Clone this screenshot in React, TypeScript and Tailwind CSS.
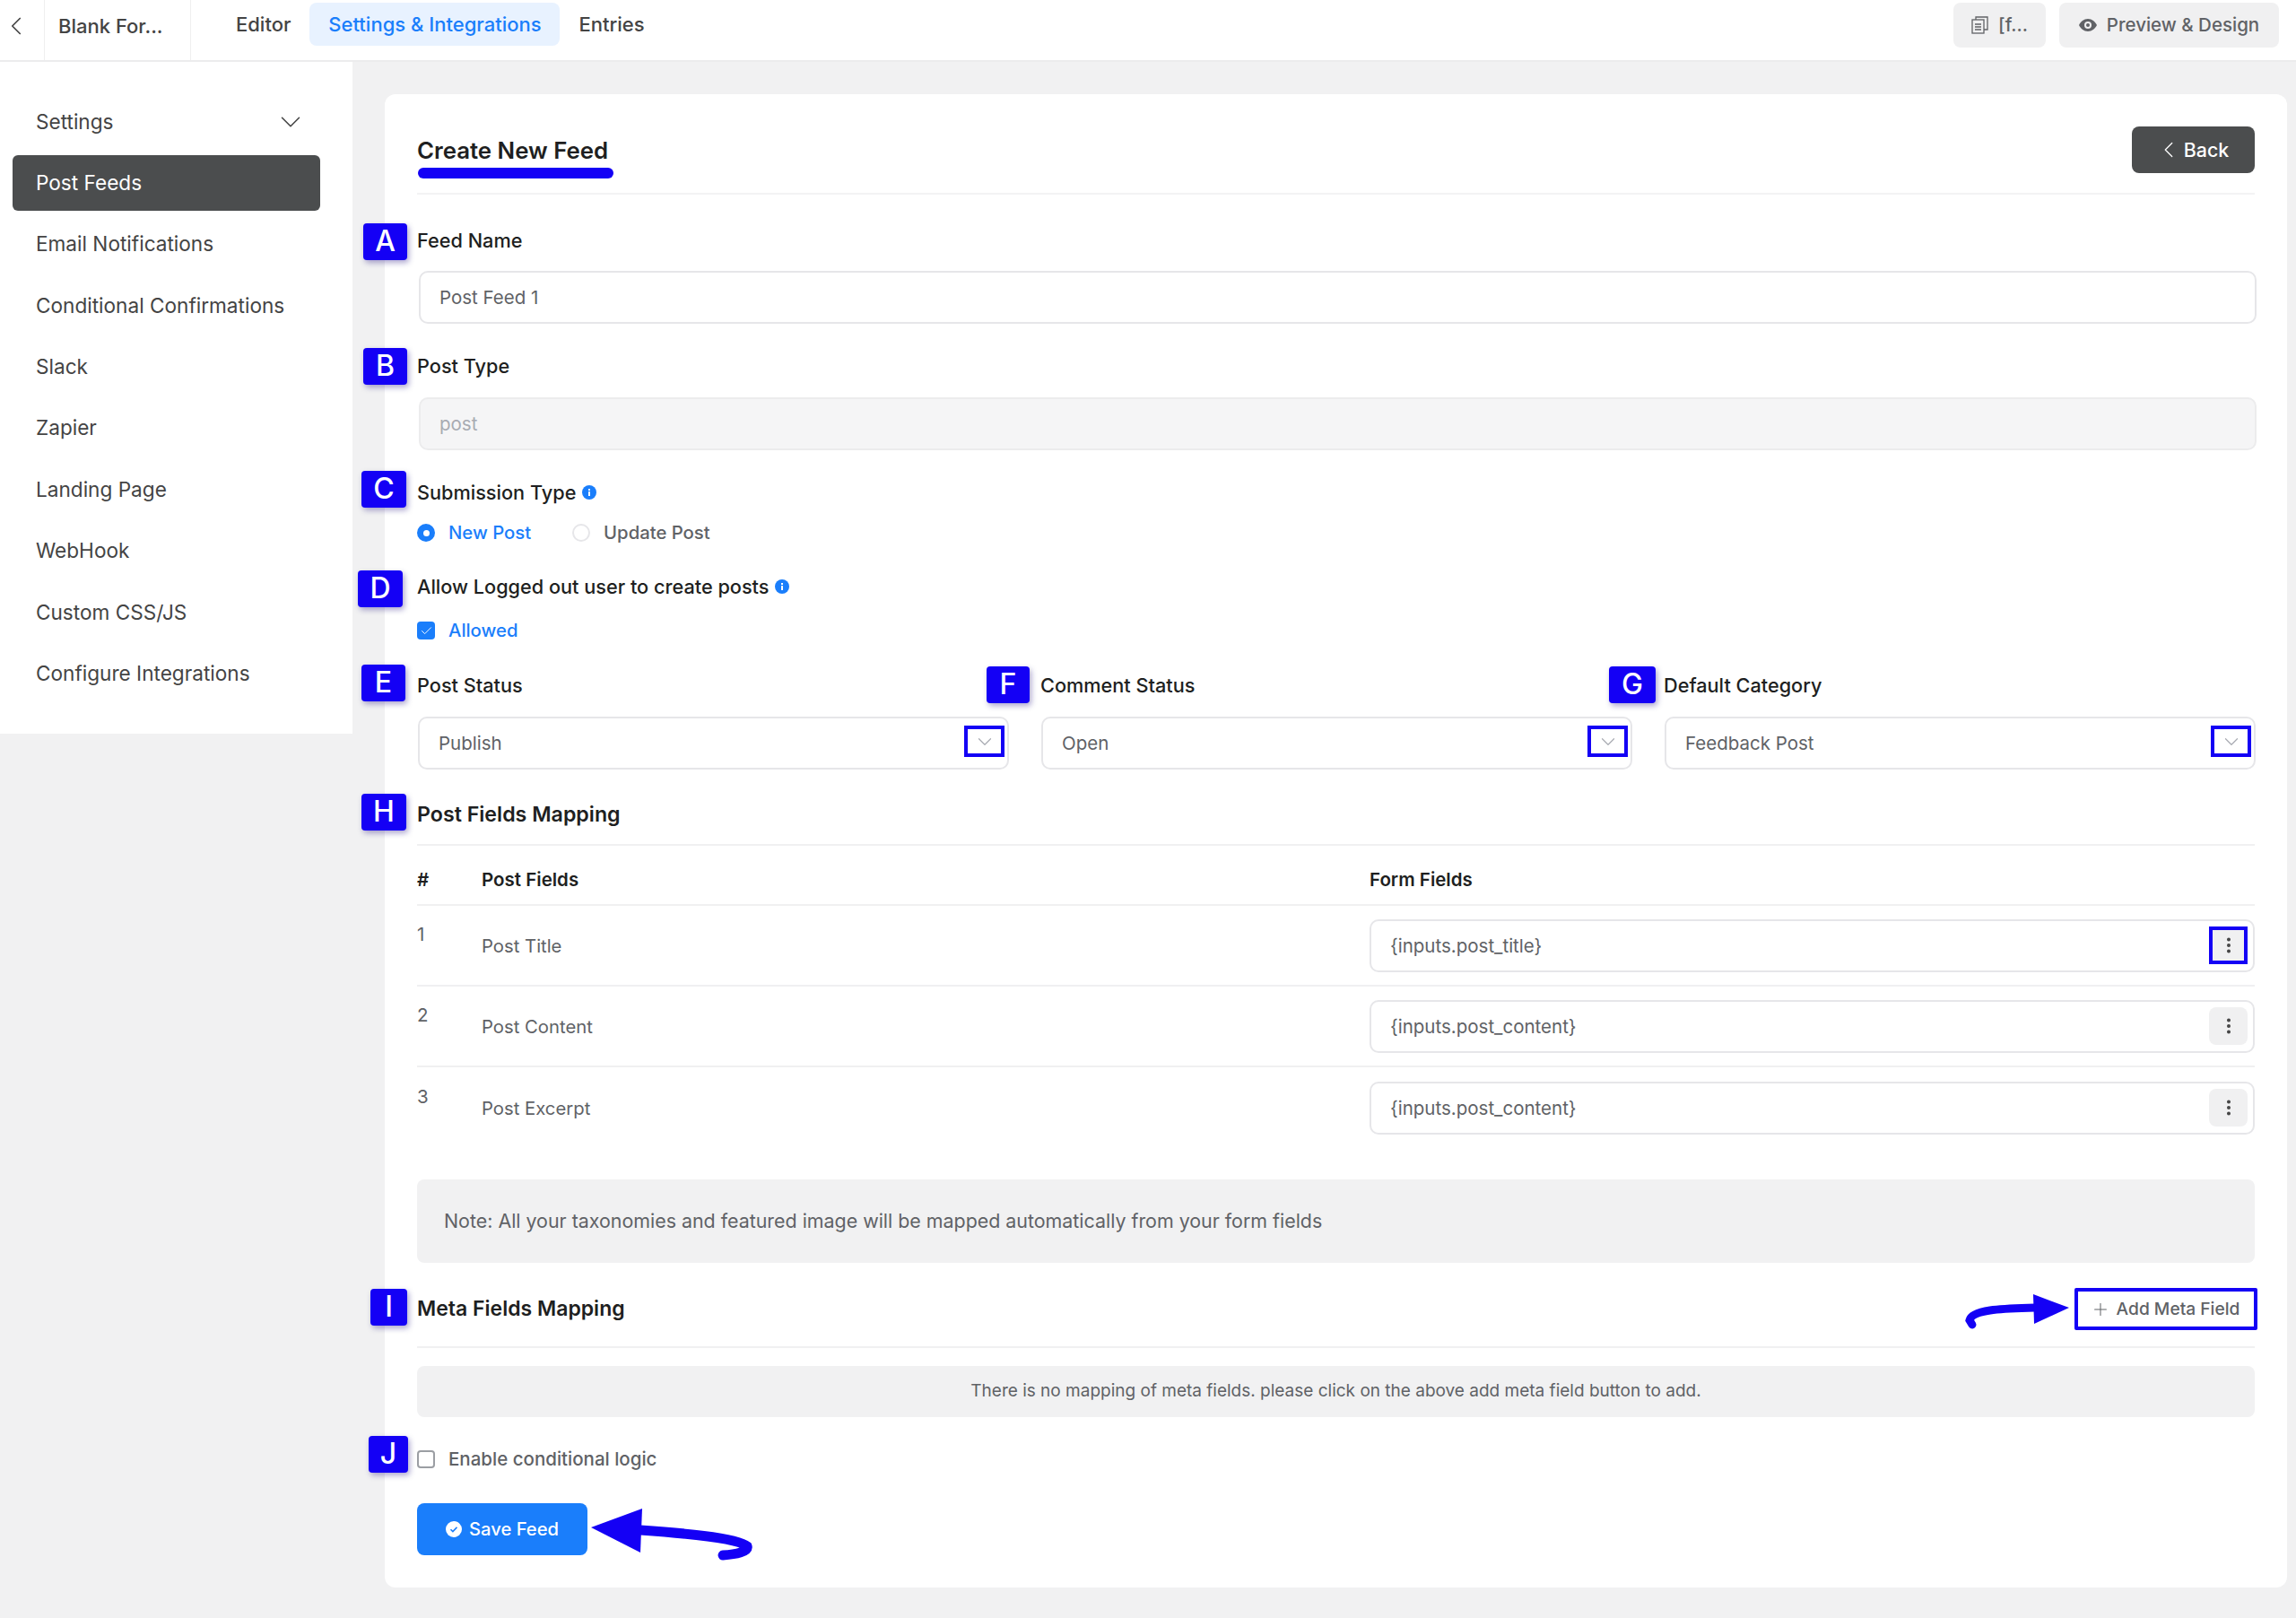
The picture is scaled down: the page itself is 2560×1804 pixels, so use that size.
import React from "react";
import { ChevronLeft, ChevronDown, Plus, Check, EllipsisVertical } from "lucide-react";

function Badge({ letter, className }: { letter: string; className: string }) {
  return (
    <div className={"absolute flex items-center justify-center rounded-[4px] bg-[#1400f5] pb-[2px] text-[32px] font-medium leading-none text-white shadow-[2px_3px_6px_rgba(20,0,120,0.35)] " + className}>
      {letter}
    </div>
  );
}

function Info() {
  return (
    <svg width="16" height="16" viewBox="0 0 16 16" className="ml-[7px] shrink-0">
      <circle cx="8" cy="8" r="8" fill="#1a7efb" />
      <rect x="7" y="7" width="2" height="5" fill="#fff" />
      <rect x="7" y="4" width="2" height="2" fill="#fff" />
    </svg>
  );
}

function Label({ children }: { children: React.ReactNode }) {
  return <div className="flex h-[28px] items-center text-[21.7px] font-medium text-[#1e1f21]">{children}</div>;
}

function Select({ value }: { value: string }) {
  return (
    <div className="relative -mr-[1px] ml-[1px] mt-[21px] flex h-[59px] items-center rounded-[10px] border-2 border-[#e6e6e9] pl-[21px] pt-[2px] text-[20.5px] text-[#606266]">
      {value}
      <div className="absolute right-[3px] top-[8px] flex h-[35px] w-[45px] items-center justify-center border-[4px] border-[#1400f5]">
        <ChevronDown size={26} strokeWidth={1.1} color="#a8abb2" />
      </div>
    </div>
  );
}

function Row({ n, name, value, hot, last }: { n: string; name: string; value: string; hot?: boolean; last?: boolean }) {
  return (
    <div className={"grid h-[90px] grid-cols-[72px_990px_1fr] items-center " + (last ? "" : "border-b-2 border-[#f0f0f1]")}>
      <div className="mb-[24px] text-[20.5px] text-[#606266]">{n}</div>
      <div className="pt-[2px] text-[20.3px] text-[#606266]">{name}</div>
      <div className="flex h-[59px] items-center justify-between rounded-[10px] border-2 border-[#e6e6e9] pl-[21px] pr-[6px] text-[20.5px] text-[#606266]">
        <span className="pt-[2px]">{value}</span>
        <div className={"flex h-[42px] w-[43px] items-center justify-center bg-[#f0f0f1] " + (hot ? "border-[4px] border-[#1400f5]" : "rounded-[8px]")}>
          <EllipsisVertical size={22} strokeWidth={2.4} color="#444" />
        </div>
      </div>
    </div>
  );
}

const menu = ["Email Notifications", "Conditional Confirmations", "Slack", "Zapier", "Landing Page", "WebHook", "Custom CSS/JS", "Configure Integrations"];

export default function App() {
  return (
    <div className="flex min-h-[1804px] w-full flex-col bg-[#f1f1f2] font-[Inter,sans-serif]">
      <header className="flex h-[69px] items-center border-b-2 border-[#ececed] bg-white pr-[19px]">
        <div className="flex h-full w-[50px] items-center justify-center border-r border-[#efefef] pb-[9px]">
          <ChevronLeft size={34} strokeWidth={1.2} color="#444" className="-ml-[14px]" />
        </div>
        <div className="flex h-full w-[163px] items-center border-r border-[#efefef] pb-[9px] pl-[15px] text-[22px] font-medium text-[#444]">Blank For...</div>
        <nav className="ml-[50px] flex items-center pb-[13px] text-[22px] font-medium text-[#444]">
          <span className="mr-[21px]">Editor</span>
          <span className="flex h-[48px] w-[279px] items-center justify-center rounded-[8px] bg-[#e8f2ff] text-[#1a7efb]">Settings &amp; Integrations</span>
          <span className="ml-[21px]">Entries</span>
        </nav>
        <div className="ml-auto flex items-center gap-[15px] pb-[11px] text-[20.5px] font-medium text-[#606266]">
          <div className="flex h-[50px] w-[103px] items-center justify-center gap-[10px] rounded-[8px] bg-[#f0f0f1]">
            <svg width="20" height="20" viewBox="0 0 20 20" fill="none" stroke="#606266" strokeWidth="1.3">
              <rect x="1" y="4" width="13" height="15" />
              <path d="M5 4V1h13v14h-4M4 9h7M4 12h7M4 15h7" />
            </svg>
            <span>[f...</span>
          </div>
          <div className="flex h-[50px] w-[245px] items-center justify-center gap-[11px] rounded-[8px] bg-[#f0f0f1]">
            <svg width="20" height="14" viewBox="0 0 20 14">
              <path fillRule="evenodd" fill="#606266" d="M10 0c4.500 0 8 3 10 7-2 4-5.500 7-10 7S2 11 0 7c2-4 5.500-7 10-7zm0 3a4 4 0 100 8 4 4 0 000-8zm0 2a2 2 0 110 4 2 2 0 010-4z" />
            </svg>
            <span>Preview &amp; Design</span>
          </div>
        </div>
      </header>

      <div className="flex flex-1">
        <aside className="h-[749px] w-[393px] shrink-0 bg-white pl-[14px] pt-[33px] text-[22.6px] text-[#444]">
          <div className="flex h-[68px] w-[343px] items-center justify-between pl-[26px] pr-[14px]">
            Settings
            <ChevronDown size={38} strokeWidth={1} color="#444" />
          </div>
          <div className="mt-[3px] flex h-[62px] w-[343px] items-center rounded-[6px] bg-[#4b4d4e] pl-[26px] text-white">Post Feeds</div>
          <div className="mt-[3px]">
            {menu.map((m) => (
              <div key={m} className="flex h-[68.4px] items-center pl-[26px]">{m}</div>
            ))}
          </div>
        </aside>

        <main className="flex-1 pl-[36px] pr-[10px] pt-[36px]">
          <div className="relative rounded-[12px] bg-white px-[36px] pb-[36px] pt-[36px]">
            <div className="flex h-[76px] items-start justify-between border-b-2 border-[#f3f3f4]">
              <h1 className="pt-[10px] text-[25.8px] font-semibold leading-[34px] text-[#1e1f21]">Create New Feed</h1>
              <button className="flex h-[52px] w-[137px] items-center justify-center gap-[2px] rounded-[8px] bg-[#4b4d4e] pr-[3px] text-[21.4px] font-medium text-white">
                <ChevronLeft size={30} strokeWidth={1} />
                Back
              </button>
            </div>
            <div className="absolute left-[37px] top-[82px] h-[12px] w-[218px] rounded-full bg-[#1400f5]" />

            <div className="mt-[37px]"><Label>Feed Name</Label></div>
            <div className="-mr-[2px] ml-[2px] mt-[20px] flex h-[59px] items-center rounded-[10px] border-2 border-[#e6e6e9] pl-[21px] pt-[2px] text-[20.5px] text-[#606266]">Post Feed 1</div>

            <div className="mt-[33px]"><Label>Post Type</Label></div>
            <div className="-mr-[2px] ml-[2px] mt-[21px] flex h-[59px] items-center rounded-[10px] border-2 border-[#ececed] bg-[#f5f5f6] pl-[21px] pt-[2px] text-[20.5px] text-[#a8abb2]">post</div>

            <div className="mt-[33px]"><Label>Submission Type<Info /></Label></div>
            <div className="mt-[17px] flex h-[28px] items-center text-[20.3px] font-medium">
              <span className="flex h-[20px] w-[20px] items-center justify-center rounded-full bg-[#1a7efb]"><span className="h-[7px] w-[7px] rounded-full bg-white" /></span>
              <span className="ml-[15px] text-[#1a7efb]">New Post</span>
              <span className="ml-[46px] h-[20px] w-[20px] rounded-full border-2 border-[#e6e6e9]" />
              <span className="ml-[15px] text-[#606266]">Update Post</span>
            </div>

            <div className="mt-[32px]"><Label>Allow Logged out user to create posts<Info /></Label></div>
            <div className="mt-[21px] flex h-[28px] items-center text-[20.3px] font-medium text-[#1a7efb]">
              <span className="flex h-[20px] w-[20px] items-center justify-center rounded-[4px] bg-[#1a7efb]"><Check size={15} strokeWidth={1.5} color="#fff" /></span>
              <span className="ml-[15px]">Allowed</span>
            </div>

            <div className="mt-[33px] grid grid-cols-3 gap-x-[36px]">
              <div><Label>Post Status</Label><Select value="Publish" /></div>
              <div><Label>Comment Status</Label><Select value="Open" /></div>
              <div><Label>Default Category</Label><Select value="Feedback Post" /></div>
            </div>

            <div className="mt-[36px] h-[49px] border-b-2 border-[#f0f0f1]">
              <div className="flex h-[28px] items-center text-[23.2px] font-semibold text-[#1e1f21]">Post Fields Mapping</div>
            </div>
            <div className="grid h-[67px] grid-cols-[72px_990px_1fr] items-center border-b-2 border-[#f0f0f1] pt-[12px] text-[20.5px] font-semibold text-[#1e1f21]">
              <span>#</span>
              <span>Post Fields</span>
              <span>Form Fields</span>
            </div>
            <Row n="1" name="Post Title" value="{inputs.post_title}" hot />
            <Row n="2" name="Post Content" value="{inputs.post_content}" />
            <Row n="3" name="Post Excerpt" value="{inputs.post_content}" last />

            <div className="mt-[35px] flex h-[93px] items-center rounded-[8px] bg-[#f1f1f2] pl-[30px] text-[21.4px] text-[#606266]">
              Note: All your taxonomies and featured image will be mapped automatically from your form fields
            </div>

            <div className="mt-[28px] flex h-[67px] items-start justify-between border-b-2 border-[#f0f0f1]">
              <div className="flex h-[47px] items-center text-[23px] font-semibold text-[#1e1f21]">Meta Fields Mapping</div>
              <button className="-mr-[3px] flex h-[47px] w-[204px] items-center justify-center gap-[7px] rounded-[2px] border-[4px] border-[#1400f5] pr-[2px] text-[19.2px] font-medium text-[#606266]">
                <Plus size={22} strokeWidth={1.1} />
                Add Meta Field
              </button>
            </div>
            <div className="mt-[20px] flex h-[57px] items-center justify-center rounded-[8px] bg-[#f1f1f2] text-[19px] text-[#606266]">
              There is no mapping of meta fields. please click on the above add meta field button to add.
            </div>

            <div className="mt-[33px] flex h-[28px] items-center text-[20.5px] font-medium text-[#606266]">
              <span className="h-[20px] w-[20px] rounded-[4px] border-2 border-[#9b9ea3]" />
              <span className="ml-[15px]">Enable conditional logic</span>
            </div>

            <button className="mt-[35px] flex h-[58px] w-[190px] items-center justify-center gap-[8px] rounded-[8px] bg-[#1a7efb] text-[20.2px] font-medium text-white">
              <svg width="18" height="18" viewBox="0 0 18 18">
                <circle cx="9" cy="9" r="9" fill="#fff" />
                <path d="M5.500 9.200l2.400 2.400 4.600-4.800" fill="none" stroke="#1a7efb" strokeWidth="1.6" />
              </svg>
              Save Feed
            </button>

            <Badge letter="A" className="left-[-24px] top-[144px] h-[41px] w-[49px]" />
            <Badge letter="B" className="left-[-24px] top-[283px] h-[41px] w-[49px]" />
            <Badge letter="C" className="left-[-26px] top-[420px] h-[41px] w-[50px]" />
            <Badge letter="D" className="left-[-30px] top-[531px] h-[41px] w-[50px]" />
            <Badge letter="E" className="left-[-26px] top-[636px] h-[41px] w-[49px]" />
            <Badge letter="F" className="left-[671px] top-[638px] h-[41px] w-[48px]" />
            <Badge letter="G" className="left-[1365px] top-[638px] h-[41px] w-[52px]" />
            <Badge letter="H" className="left-[-26px] top-[780px] h-[41px] w-[50px]" />
            <Badge letter="I" className="left-[-16px] top-[1332px] h-[41px] w-[41px]" />
            <Badge letter="J" className="left-[-18px] top-[1496px] h-[41px] w-[44px]" />

            <svg className="absolute left-[1760px] top-[1330px]" width="125" height="50" viewBox="0 0 125 50" fill="none">
              <path d="M80 23 C50 24 10 24 7 37 L10 42" stroke="#1400f5" strokeWidth="9" strokeLinecap="round" />
              <path d="M78 8 L118 23 L79 41 Z" fill="#1400f5" />
            </svg>
            <svg className="absolute left-[227px] top-[1575px]" width="190" height="62" viewBox="0 0 190 62" fill="none">
              <path d="M58 26 C100 29 165 34 177 44 C179 50 165 53 150 54" stroke="#1400f5" strokeWidth="11" strokeLinecap="round" />
              <path d="M60 2 L3 23 L58 51 Z" fill="#1400f5" />
            </svg>
          </div>
        </main>
      </div>
    </div>
  );
}
